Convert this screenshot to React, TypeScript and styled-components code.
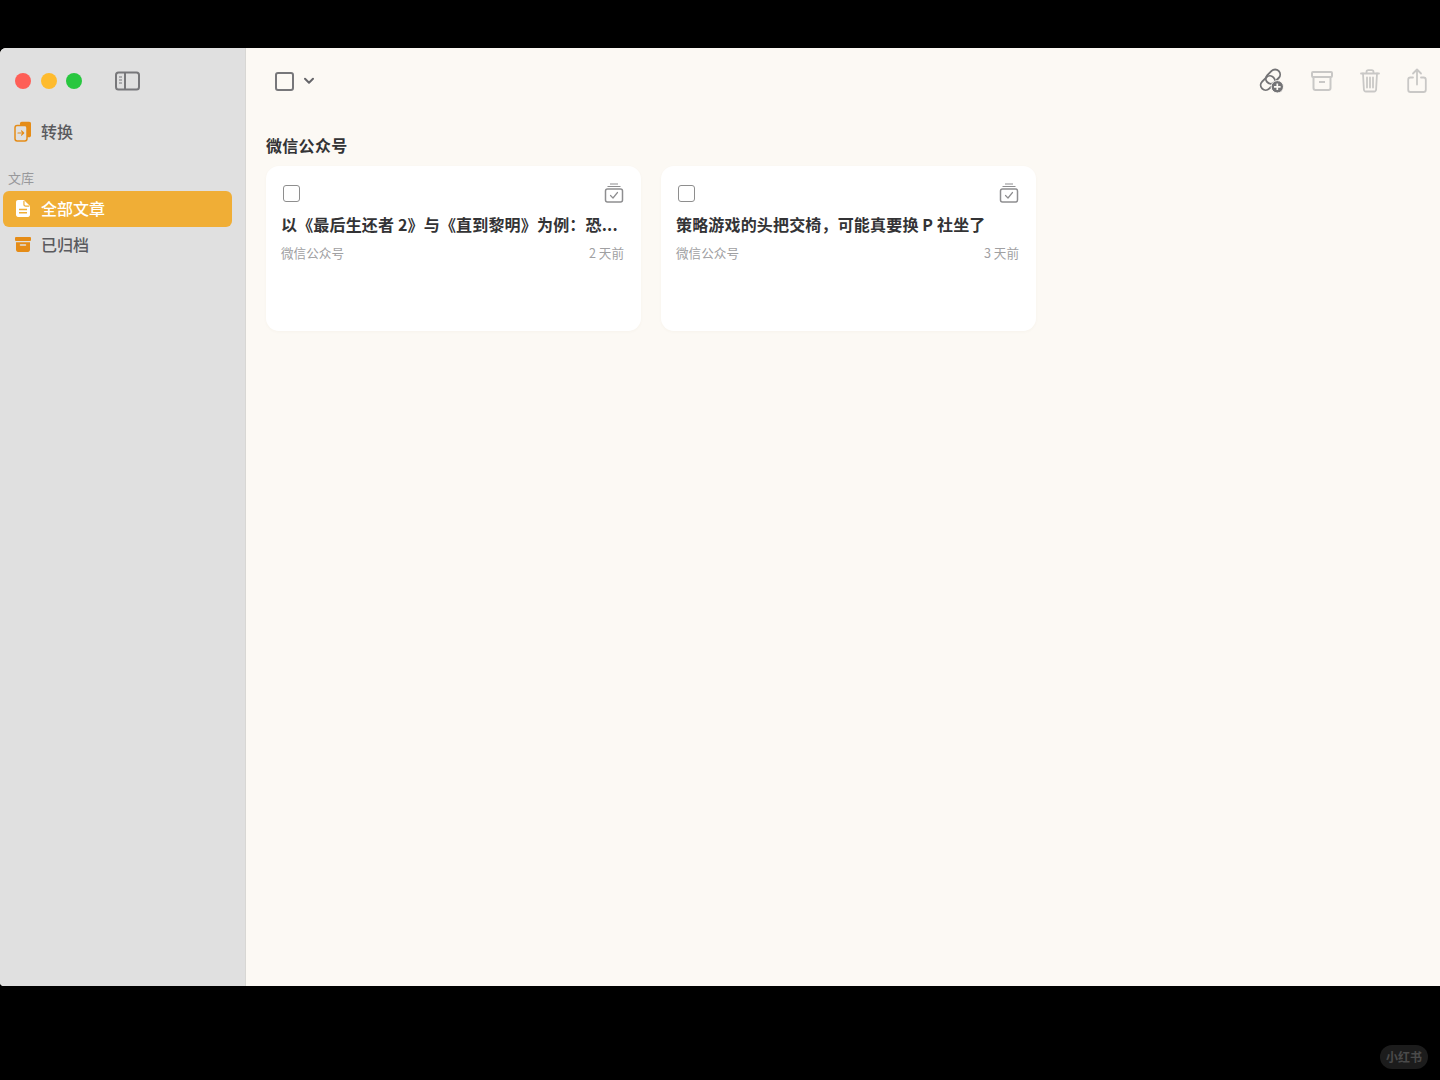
import React from "react";
import styled, { createGlobalStyle } from "styled-components";

const FONT = `"Noto Sans CJK SC", "Noto Sans", "Liberation Sans", sans-serif`;

const Global = createGlobalStyle`
  html, body { margin: 0; padding: 0; background: #000; }
  body { font-family: ${FONT}; }
  * { box-sizing: border-box; }
`;

const Screen = styled.div`
  position: relative;
  width: 1440px;
  height: 1080px;
  background: #000;
  padding: 48px 0 94px;
  overflow: hidden;
`;

const Win = styled.div`
  display: flex;
  height: 938px;
  background: #fcf9f4;
  border-radius: 6px 0 0 4px;
  overflow: hidden;
`;

const Sidebar = styled.aside`
  width: 246px;
  flex: none;
  background: #e0e0e0;
  border-right: 1px solid #d8d7d4;
  display: flex;
  flex-direction: column;
`;

const TitleRow = styled.div`
  display: flex;
  align-items: center;
  height: 66px;
  padding-left: 15px;
`;

const Dot = styled.span<{ $c: string }>`
  width: 16px;
  height: 16px;
  border-radius: 50%;
  background: ${(p) => p.$c};
  margin-right: 9.5px;
`;

const ToggleBtn = styled.span`
  display: flex;
  margin-left: 23px;
  margin-top: -1px;
`;

const NavList = styled.nav`
  display: flex;
  flex-direction: column;
  padding: 0 13px 0 3px;
`;

const NavItem = styled.div<{ $active?: boolean; $gapAfter?: number }>`
  height: 36px;
  display: flex;
  align-items: center;
  gap: 9px;
  padding: 0 0 2px 11px;
  border-radius: 6px;
  font-size: 16px;
  font-weight: 500;
  line-height: 20px;
  color: ${(p) => (p.$active ? "#fff" : "#5a5a5e")};
  background: ${(p) => (p.$active ? "#f0ae36" : "transparent")};
  margin-bottom: ${(p) => p.$gapAfter ?? 0}px;
`;

const NavIcon = styled.span`
  width: 18px;
  height: 20px;
  display: flex;
  align-items: center;
  justify-content: center;
  flex: none;
`;

const SectionLabel = styled.div`
  font-size: 13px;
  line-height: 18px;
  height: 18px;
  color: #98989b;
  padding-left: 5px;
  margin-bottom: 4px;
`;

const Main = styled.main`
  flex: 1;
  display: flex;
  flex-direction: column;
  min-width: 0;
`;

const Toolbar = styled.div`
  height: 66px;
  display: flex;
  align-items: center;
  justify-content: space-between;
  padding: 0 13px 0 29px;
`;

const ToolLeft = styled.div`
  display: flex;
  align-items: center;
  gap: 9px;
`;

const ToolRight = styled.div`
  display: flex;
  align-items: center;
  gap: 27px;
`;

const Content = styled.div`
  padding: 20px 20px 0;
`;

const Heading = styled.h2`
  margin: 0 0 9px;
  font-size: 16px;
  line-height: 23px;
  font-weight: 700;
  letter-spacing: 0.3px;
  color: #333335;
`;

const Cards = styled.div`
  display: flex;
  gap: 20px;
`;

const Card = styled.article`
  width: 375px;
  height: 165px;
  background: #fff;
  border-radius: 13px;
  padding: 15px 16px 0 15px;
  box-shadow: 0 1px 3px rgba(120, 100, 60, 0.04);
`;

const CardTop = styled.div`
  display: flex;
  align-items: center;
  justify-content: space-between;
  height: 24px;
  padding: 0 1px 0 2px;
`;

const Check = styled.span`
  width: 17px;
  height: 17px;
  border: 1.5px solid #8e8e8e;
  border-radius: 3px;
  display: block;
`;

const ToolCheck = styled(Check)`
  width: 19px;
  height: 19px;
  border-width: 2px;
  border-color: #77777a;
  border-radius: 3px;
`;

const CardTitle = styled.h3`
  margin: 7px 0 0;
  font-size: 16px;
  line-height: 24px;
  height: 24px;
  font-weight: 700;
  color: #333335;
  white-space: nowrap;
  letter-spacing: 0.17px;
`;

const Meta = styled.div`
  display: flex;
  justify-content: space-between;
  margin-top: 8px;
  padding-right: 1px;
  font-size: 12.6px;
  line-height: 18px;
  color: #a0a0a2;
`;

const Watermark = styled.div`
  position: absolute;
  left: 1380px;
  top: 1045px;
  width: 48px;
  height: 24px;
  border-radius: 12px;
  background: #1c1c1c;
  color: #4a4a4a;
  font-size: 12px;
  font-weight: 700;
  line-height: 24px;
  text-align: center;
  white-space: nowrap;
`;

const SidebarToggleIcon = () => (
  <svg width="25" height="20" viewBox="0 0 25 20" fill="none" stroke="#77777a" strokeWidth="2">
    <rect x="1" y="1.5" width="23" height="17" rx="2.5" />
    <path d="M10 1.5v17" />
    <path d="M4 6h3M4 9h3M4 12h3" strokeWidth="1.2" />
  </svg>
);

const ConvertIcon = () => (
  <svg width="18" height="22" viewBox="0 0 18 22" fill="none">
    <path d="M6 3.5c0-1 .7-1.8 1.8-1.8h7.4c1 0 1.8.8 1.8 1.8v12c0 1-.8 1.8-1.8 1.8H6z" fill="#e58c17" />
    <rect x="1" y="5.5" width="12" height="15.5" rx="2.2" fill="#e0e0e0" stroke="#e58c17" strokeWidth="1.5" />
    <path d="M4 13h5.5M7.5 10.8 9.7 13l-2.2 2.2" stroke="#e58c17" strokeWidth="1.2" strokeLinecap="round" strokeLinejoin="round" />
  </svg>
);

const DocIcon = () => (
  <svg width="14" height="17" viewBox="0 0 15 18">
    <path
      d="M2.2 0h6.3L15 6.4v9.4c0 1.2-1 2.2-2.2 2.2H2.2C1 18 0 17 0 15.8V2.2C0 1 1 0 2.2 0z"
      fill="#fff"
    />
    <path d="M8.5 .6v4c0 1 .8 1.8 1.8 1.8h4" fill="none" stroke="#f0ae36" strokeWidth="1.3" />
    <path d="M3.2 10h8.6M3.2 13.5h8.6" stroke="#f0ae36" strokeWidth="1.5" />
  </svg>
);

const ArchiveFilledIcon = () => (
  <svg width="16" height="15" viewBox="0 0 16 15">
    <rect x="0" y="0" width="16" height="4" rx="1" fill="#e58c17" />
    <path d="M1 5.2h14v7.6c0 1.2-.9 2.2-2 2.2H3c-1.1 0-2-1-2-2.2z" fill="#e58c17" />
    <path d="M5.5 8h5" stroke="#e0e0e0" strokeWidth="1.5" strokeLinecap="round" />
  </svg>
);

const Chevron = () => (
  <svg width="12" height="8" viewBox="0 0 12 8" fill="none" stroke="#66666a" strokeWidth="2" strokeLinecap="round" strokeLinejoin="round">
    <path d="M2 1.8 6 5.8l4-4" />
  </svg>
);

const LinkPlusIcon = () => (
  <svg width="26" height="26" viewBox="0 0 26 26" fill="none">
    <g stroke="#747476" strokeWidth="1.9">
      <rect x="10" y="0.6" width="10" height="16" rx="5" transform="rotate(45 15 8.6)" />
      <rect x="4.8" y="7" width="10" height="16" rx="5" transform="rotate(45 9.8 15)" />
    </g>
    <circle cx="19.3" cy="18.8" r="6.2" fill="#747476" stroke="#fcf9f4" strokeWidth="1" />
    <path d="M19.3 15.5v6.6M16 18.8h6.6" stroke="#fcf9f4" strokeWidth="1.7" />
  </svg>
);

const ArchiveIcon = () => (
  <svg width="22" height="22" viewBox="0 0 22 22" fill="none" stroke="#c9c8c6" strokeWidth="2">
    <rect x="1" y="2" width="20" height="5" rx="1" />
    <path d="M2.5 7v11c0 1 .8 2 2 2h13c1.2 0 2-1 2-2V7" />
    <path d="M8 12h6" />
  </svg>
);

const TrashIcon = () => (
  <svg width="20" height="24" viewBox="0 0 20 24" fill="none" stroke="#c9c8c6" strokeWidth="1.8" strokeLinecap="round">
    <path d="M1 4.5h18M6.5 4.5V3c0-1 .8-1.8 1.8-1.8h3.4c1 0 1.8.8 1.8 1.8v1.5" />
    <path d="M3 4.5l.9 16c.1 1.1.9 2 2 2h8.2c1.1 0 1.9-.9 2-2l.9-16" />
    <path d="M7 8.5v10M10 8.5v10M13 8.5v10" />
  </svg>
);

const ShareIcon = () => (
  <svg width="20" height="26" viewBox="0 0 20 26" fill="none" stroke="#c9c8c6" strokeWidth="1.8" strokeLinecap="round" strokeLinejoin="round">
    <path d="M6 9.5H3.5c-1.3 0-2.3 1-2.3 2.3v9.9c0 1.3 1 2.3 2.3 2.3h13c1.3 0 2.3-1 2.3-2.3v-9.9c0-1.3-1-2.3-2.3-2.3H14" />
    <path d="M10 16.5V2M6 5.5 10 1.5l4 4" />
  </svg>
);

const CardArchiveIcon = () => (
  <svg width="20" height="20" viewBox="0 0 20 20" fill="none" stroke="#8e8e90">
    <path d="M6 1h8" strokeWidth="1.2" />
    <path d="M3.5 3.5h13" strokeWidth="1.2" />
    <rect x="1.5" y="6" width="17" height="13" rx="2" strokeWidth="1.5" />
    <path d="M6.5 12.5 9 15l4.5-5.5" strokeWidth="1.2" strokeLinecap="round" strokeLinejoin="round" />
  </svg>
);

const articles = [
  { title: "以《最后生还者 2》与《直到黎明》为例\uFF1A恐...", age: "2 天前" },
  { title: "策略游戏的头把交椅\uFF0C可能真要换 P 社坐了", age: "3 天前" },
];

export default function App() {
  return (
    <>
      <Global />
      <Screen>
        <Win>
          <Sidebar>
            <TitleRow>
              <Dot $c="#fe5f57" />
              <Dot $c="#febb2e" />
              <Dot $c="#28c73f" />
              <ToggleBtn>
                <SidebarToggleIcon />
              </ToggleBtn>
            </TitleRow>
            <NavList>
              <NavItem $gapAfter={19}>
                <NavIcon>
                  <ConvertIcon />
                </NavIcon>
                转换
              </NavItem>
              <SectionLabel>文库</SectionLabel>
              <NavItem $active>
                <NavIcon>
                  <DocIcon />
                </NavIcon>
                全部文章
              </NavItem>
              <NavItem>
                <NavIcon>
                  <ArchiveFilledIcon />
                </NavIcon>
                已归档
              </NavItem>
            </NavList>
          </Sidebar>
          <Main>
            <Toolbar>
              <ToolLeft>
                <ToolCheck />
                <Chevron />
              </ToolLeft>
              <ToolRight>
                <LinkPlusIcon />
                <ArchiveIcon />
                <TrashIcon />
                <ShareIcon />
              </ToolRight>
            </Toolbar>
            <Content>
              <Heading>微信公众号</Heading>
              <Cards>
                {articles.map((a) => (
                  <Card key={a.title}>
                    <CardTop>
                      <Check />
                      <CardArchiveIcon />
                    </CardTop>
                    <CardTitle>{a.title}</CardTitle>
                    <Meta>
                      <span>微信公众号</span>
                      <span>{a.age}</span>
                    </Meta>
                  </Card>
                ))}
              </Cards>
            </Content>
          </Main>
        </Win>
        <Watermark>小红书</Watermark>
      </Screen>
    </>
  );
}
